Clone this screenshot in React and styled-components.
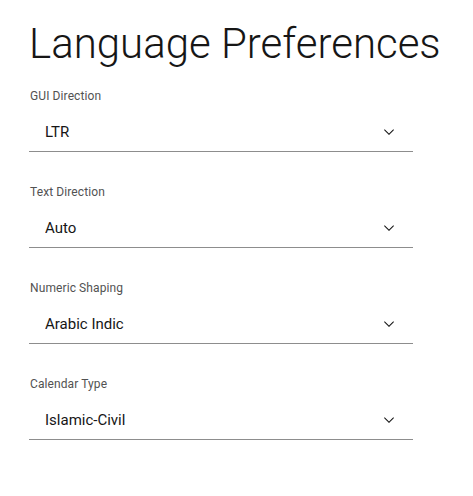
import React, { useState } from "react";
import styled, { createGlobalStyle } from "styled-components";

const GlobalStyle = createGlobalStyle`
  html, body {
    margin: 0;
    padding: 0;
    background: #ffffff;
  }
  body {
    font-family: Roboto, "Inter", "Liberation Sans", sans-serif;
    color: #161616;
  }
`;

const SPage = styled.main`
  padding: 19px 29px 0 29px;
  width: 384px;
`;

const STitle = styled.h1`
  margin: 0 0 19px 0;
  font-size: 42px;
  line-height: 50px;
  font-weight: 300;
  letter-spacing: 0;
  white-space: nowrap;
  color: #161616;
`;

const SForm = styled.div`
  display: flex;
  flex-direction: column;
  gap: 32px;
`;

const SField = styled.div`
  display: flex;
  flex-direction: column;
`;

const SLabel = styled.label`
  font-size: 12px;
  line-height: 16px;
  letter-spacing: 0.1px;
  color: #525252;
  margin-bottom: 8px;
  padding-left: 1px;
`;

const SSelectWrap = styled.div`
  position: relative;
  height: 40px;
  border-bottom: 1px solid #8d8d8d;
  box-sizing: border-box;
`;

const SSelect = styled.select`
  appearance: none;
  -webkit-appearance: none;
  width: 100%;
  height: 39px;
  border: none;
  outline: none;
  background: transparent;
  font-family: inherit;
  font-size: 15px;
  letter-spacing: 0;
  color: #161616;
  padding: 1px 48px 0 16px;
  cursor: pointer;
`;

const SChevron = styled.svg`
  position: absolute;
  right: 16px;
  top: 50%;
  transform: translateY(-50%);
  width: 16px;
  height: 16px;
  fill: #161616;
  pointer-events: none;
`;

const fields = [
  { id: "gui", label: "GUI Direction", value: "LTR", options: ["LTR", "RTL"] },
  { id: "text", label: "Text Direction", value: "Auto", options: ["Auto", "LTR", "RTL"] },
  { id: "numeric", label: "Numeric Shaping", value: "Arabic Indic", options: ["Nominal", "Arabic Indic", "Contextual"] },
  { id: "calendar", label: "Calendar Type", value: "Islamic-Civil", options: ["Gregorian", "Islamic", "Islamic-Civil", "Hebrew"] },
];

const SelectField = ({ id, label, value, options, onChange }) => (
  <SField>
    <SLabel htmlFor={id}>{label}</SLabel>
    <SSelectWrap>
      <SSelect id={id} value={value} onChange={(e) => onChange(id, e.target.value)}>
        {options.map((o) => (
          <option key={o} value={o}>{o}</option>
        ))}
      </SSelect>
      <SChevron viewBox="0 0 16 16" aria-hidden="true">
        <path d="M8 11L3 6l.7-.7L8 9.6l4.3-4.3.7.7z" />
      </SChevron>
    </SSelectWrap>
  </SField>
);

const App = () => {
  const [values, setValues] = useState(
    Object.fromEntries(fields.map((f) => [f.id, f.value]))
  );
  const update = (id, v) => setValues((prev) => ({ ...prev, [id]: v }));

  return (
    <>
      <GlobalStyle />
      <SPage>
        <STitle>Language Preferences</STitle>
        <SForm>
          {fields.map((f) => (
            <SelectField
              key={f.id}
              id={f.id}
              label={f.label}
              value={values[f.id]}
              options={f.options}
              onChange={update}
            />
          ))}
        </SForm>
      </SPage>
    </>
  );
};

export default App;
